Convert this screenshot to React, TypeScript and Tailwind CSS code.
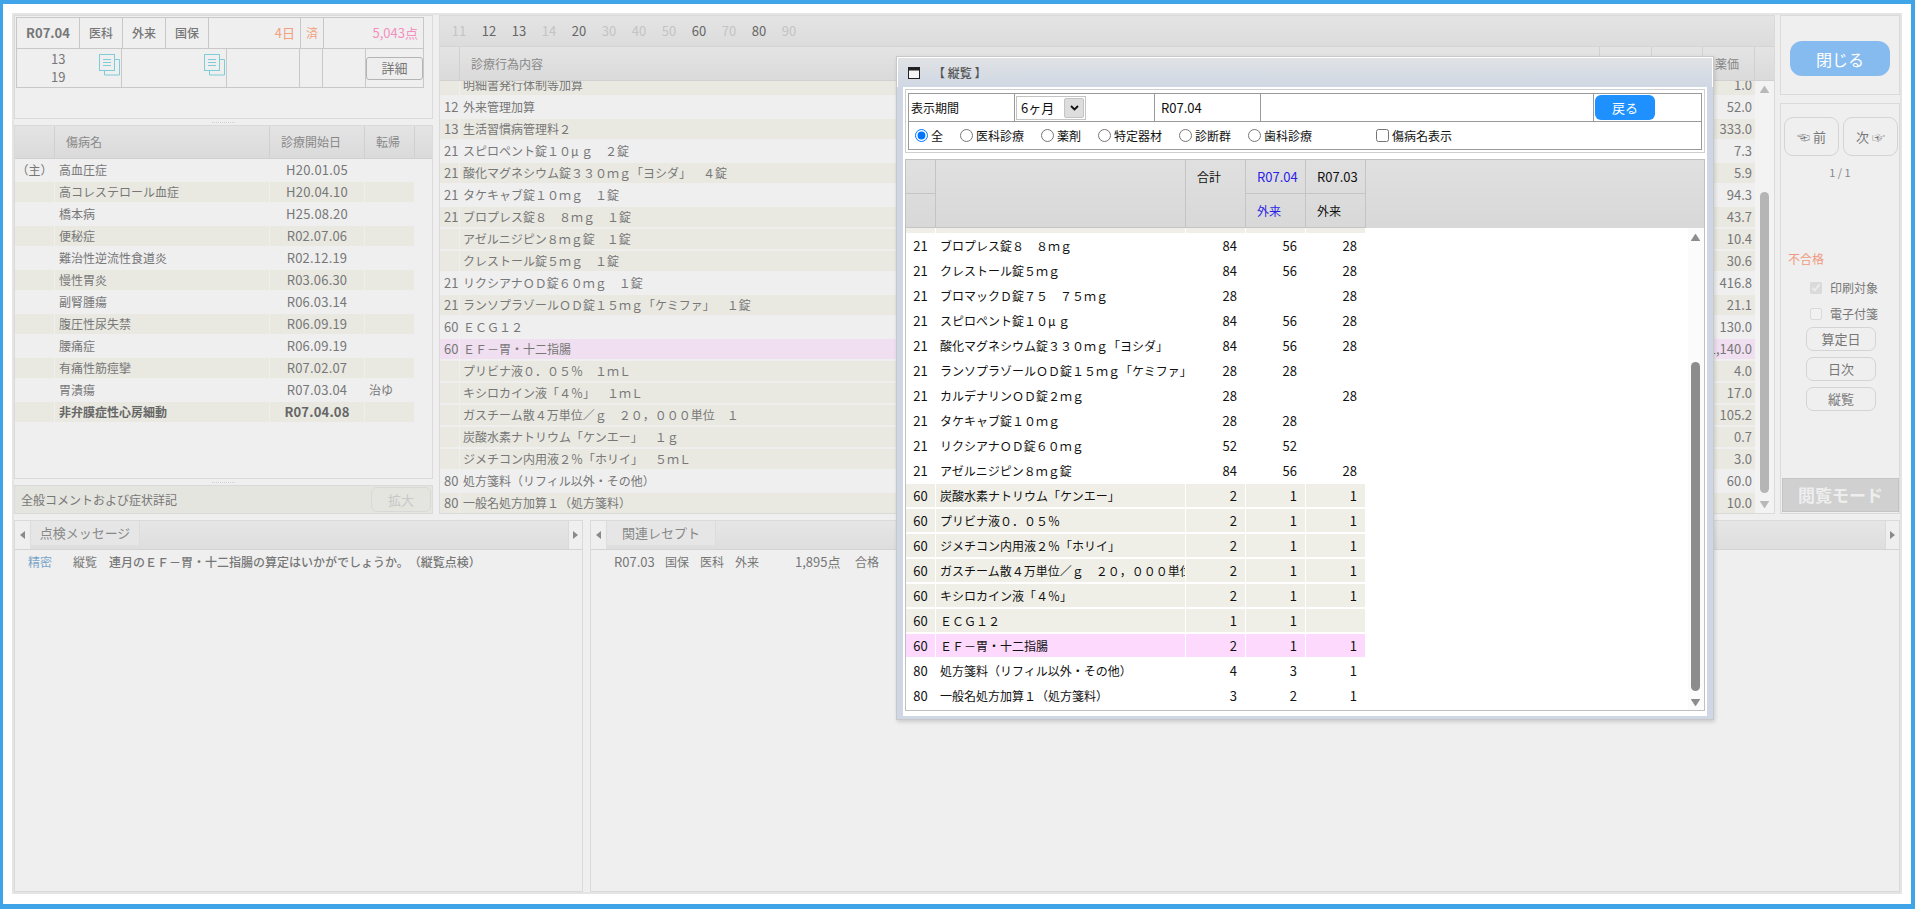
const TABS = [
  { label: '11', on: false },
  { label: '12', on: true },
  { label: '13', on: true },
  { label: '14', on: false },
  { label: '20', on: true },
  { label: '30', on: false },
  { label: '40', on: false },
  { label: '50', on: false },
  { label: '60', on: true },
  { label: '70', on: false },
  { label: '80', on: true },
  { label: '90', on: false },
]

const DISEASES = [
  { main: '（主）', name: '高血圧症', date: 'H20.01.05', end: '' },
  { main: '', name: '高コレステロール血症', date: 'H20.04.10', end: '' },
  { main: '', name: '橋本病', date: 'H25.08.20', end: '' },
  { main: '', name: '便秘症', date: 'R02.07.06', end: '' },
  { main: '', name: '難治性逆流性食道炎', date: 'R02.12.19', end: '' },
  { main: '', name: '慢性胃炎', date: 'R03.06.30', end: '' },
  { main: '', name: '副腎腫瘍', date: 'R06.03.14', end: '' },
  { main: '', name: '腹圧性尿失禁', date: 'R06.09.19', end: '' },
  { main: '', name: '腰痛症', date: 'R06.09.19', end: '' },
  { main: '', name: '有痛性筋痙攣', date: 'R07.02.07', end: '' },
  { main: '', name: '胃潰瘍', date: 'R07.03.04', end: '治ゆ' },
  { main: '', name: '非弁膜症性心房細動', date: 'R07.04.08', end: '', bold: true },
]

const ACTS = [
  { code: '', name: '明細書発行体制等加算', value: '1.0', tone: 'stripe' },
  { code: '12', name: '外来管理加算', value: '52.0', tone: '' },
  { code: '13', name: '生活習慣病管理料２', value: '333.0', tone: 'stripe' },
  { code: '21', name: 'スピロペント錠１０μ\u2009ｇ　２錠', value: '7.3', tone: '' },
  { code: '21', name: '酸化マグネシウム錠３３０ｍｇ「ヨシダ」　４錠', value: '5.9', tone: 'stripe' },
  { code: '21', name: 'タケキャブ錠１０ｍｇ　１錠', value: '94.3', tone: '' },
  { code: '21', name: 'ブロプレス錠８　８ｍｇ　１錠', value: '43.7', tone: 'stripe' },
  { code: '', name: 'アゼルニジピン８ｍｇ錠　１錠', value: '10.4', tone: 'stripe' },
  { code: '', name: 'クレストール錠５ｍｇ　１錠', value: '30.6', tone: 'stripe' },
  { code: '21', name: 'リクシアナＯＤ錠６０ｍｇ　１錠', value: '416.8', tone: '' },
  { code: '21', name: 'ランソプラゾールＯＤ錠１５ｍｇ「ケミファ」　１錠', value: '21.1', tone: 'stripe' },
  { code: '60', name: 'ＥＣＧ１２', value: '130.0', tone: '' },
  { code: '60', name: 'ＥＦ－胃・十二指腸', value: '1,140.0', tone: 'pink' },
  { code: '', name: 'プリビナ液０．０５％　１ｍＬ', value: '4.0', tone: 'stripe' },
  { code: '', name: 'キシロカイン液「４％」　１ｍＬ', value: '17.0', tone: 'stripe' },
  { code: '', name: 'ガスチーム散４万単位／ｇ　２０，０００単位　１', value: '105.2', tone: 'stripe' },
  { code: '', name: '炭酸水素ナトリウム「ケンエー」　１ｇ', value: '0.7', tone: 'stripe' },
  { code: '', name: 'ジメチコン内用液２％「ホリイ」　５ｍＬ', value: '3.0', tone: 'stripe' },
  { code: '80', name: '処方箋料（リフィル以外・その他）', value: '60.0', tone: '' },
  { code: '80', name: '一般名処方加算１（処方箋料）', value: '10.0', tone: 'stripe' },
]

const SUMMARY = [
  { code: '21', name: 'ブロプレス錠８　８ｍｇ', total: '84', a: '56', b: '28', tone: '' },
  { code: '21', name: 'クレストール錠５ｍｇ', total: '84', a: '56', b: '28', tone: '' },
  { code: '21', name: 'ブロマックＤ錠７５　７５ｍｇ', total: '28', a: '', b: '28', tone: '' },
  { code: '21', name: 'スピロペント錠１０μ\u2009ｇ', total: '84', a: '56', b: '28', tone: '' },
  { code: '21', name: '酸化マグネシウム錠３３０ｍｇ「ヨシダ」', total: '84', a: '56', b: '28', tone: '' },
  { code: '21', name: 'ランソプラゾールＯＤ錠１５ｍｇ「ケミファ」', total: '28', a: '28', b: '', tone: '' },
  { code: '21', name: 'カルデナリンＯＤ錠２ｍｇ', total: '28', a: '', b: '28', tone: '' },
  { code: '21', name: 'タケキャブ錠１０ｍｇ', total: '28', a: '28', b: '', tone: '' },
  { code: '21', name: 'リクシアナＯＤ錠６０ｍｇ', total: '52', a: '52', b: '', tone: '' },
  { code: '21', name: 'アゼルニジピン８ｍｇ錠', total: '84', a: '56', b: '28', tone: '' },
  { code: '60', name: '炭酸水素ナトリウム「ケンエー」', total: '2', a: '1', b: '1', tone: 'stripe' },
  { code: '60', name: 'プリビナ液０．０５％', total: '2', a: '1', b: '1', tone: 'stripe' },
  { code: '60', name: 'ジメチコン内用液２％「ホリイ」', total: '2', a: '1', b: '1', tone: 'stripe' },
  { code: '60', name: 'ガスチーム散４万単位／ｇ　２０，０００単位　１', total: '2', a: '1', b: '1', tone: 'stripe' },
  { code: '60', name: 'キシロカイン液「４％」', total: '2', a: '1', b: '1', tone: 'stripe' },
  { code: '60', name: 'ＥＣＧ１２', total: '1', a: '1', b: '', tone: 'stripe' },
  { code: '60', name: 'ＥＦ－胃・十二指腸', total: '2', a: '1', b: '1', tone: 'pink' },
  { code: '80', name: '処方箋料（リフィル以外・その他）', total: '4', a: '3', b: '1', tone: '' },
  { code: '80', name: '一般名処方加算１（処方箋料）', total: '3', a: '2', b: '1', tone: '' },
]

const RADIOS = ['全', '医科診療', '薬剤', '特定器材', '診断群', '歯科診療']

function DocIcon() {
  return (
    <svg width="21" height="22" viewBox="0 0 21 22" fill="none" stroke="#7ccdd8" strokeWidth="1">
      <path d="M15.5 5.5h5v15.5h-15v-5" />
      <rect x="0.5" y="0.5" width="15" height="16" fill="#efefef" />
      <path d="M4 5.5h8M4 8.5h8M4 11.5h8" />
    </svg>
  )
}

function Triangle({ down, color, size = 9 }: { down?: boolean; color: string; size?: number }) {
  return (
    <svg width={size} height={size - 2} viewBox="0 0 9 7" className="shrink-0">
      <path d={down ? 'M0 0h9L4.5 7z' : 'M4.5 0L9 7H0z'} fill={color} stroke={color} strokeWidth="0.6" strokeLinejoin="round" />
    </svg>
  )
}

function SideArrow({ left }: { left?: boolean }) {
  return (
    <svg width="5" height="8" viewBox="0 0 5 8">
      <path d={left ? 'M5 0v8L0 4z' : 'M0 0v8l5-4z'} fill="#8a8a8a" />
    </svg>
  )
}

function Splitter() {
  return (
    <div className="h-[6px] flex items-center justify-center">
      <div className="w-[23px] border-t border-dotted border-[#cfcfcf]" />
    </div>
  )
}

function TopSummary() {
  return (
    <div className="h-[104px] border border-[#dadada] p-px pr-2">
      <div className="border border-[#c8c8c8] text-[#777]">
        <div className="flex h-[31px] border-b border-[#c8c8c8] items-center text-[12px]">
          <div className="w-[63px] h-full border-r border-[#c8c8c8] flex items-center justify-center font-bold text-[13px]">R07.04</div>
          <div className="w-[43px] h-full border-r border-[#c8c8c8] flex items-center justify-center font-medium">医科</div>
          <div className="w-[43px] h-full border-r border-[#c8c8c8] flex items-center justify-center font-medium">外来</div>
          <div className="w-[43px] h-full border-r border-[#c8c8c8] flex items-center justify-center font-medium">国保</div>
          <div className="w-[92px] h-full border-r border-[#c8c8c8] flex items-center justify-end pr-[5px] text-[13px] text-[#f2a07e]">4日</div>
          <div className="w-[23px] h-full border-r border-[#c8c8c8] flex items-center justify-center text-[#f2a07e]">済</div>
          <div className="flex-1 h-full flex items-center justify-end pr-[5px] text-[13px] text-[#f48fbe]">5,043点</div>
        </div>
        <div className="flex h-[38px]">
          <div className="w-[105px] border-r border-[#c8c8c8] flex justify-between pl-[34px] pr-[1px]">
            <div className="text-[13px] leading-[18px] pt-px">
              <div>13</div>
              <div>19</div>
            </div>
            <div className="pt-[5px]"><DocIcon /></div>
          </div>
          <div className="w-[105px] border-r border-[#c8c8c8] flex justify-end pr-[1px] pt-[5px]"><DocIcon /></div>
          <div className="w-[73px] border-r border-[#c8c8c8]" />
          <div className="w-[23px] border-r border-[#c8c8c8]" />
          <div className="w-[43px] border-r border-[#c8c8c8]" />
          <div className="flex-1 flex items-center justify-center">
            <button className="w-[57px] h-[23px] rounded-[3px] border border-[#b4b4b4] bg-[#eeeeee] text-[13px] text-[#777]">詳細</button>
          </div>
        </div>
      </div>
    </div>
  )
}

function DiseaseTable() {
  return (
    <div className="h-[354px] border border-[#dadada] text-[12px] text-[#777] overflow-hidden">
      <div className="flex h-[33px] bg-gradient-to-b from-[#e4e4e4] to-[#dadada] border-b border-[#d0d0d0] text-[#888]">
        <div className="w-[40px] border-r border-[#d0d0d0]" />
        <div className="w-[215px] border-r border-[#d0d0d0] pl-[11px] flex items-center">傷病名</div>
        <div className="w-[95px] border-r border-[#d0d0d0] pl-[11px] flex items-center">診療開始日</div>
        <div className="w-[50px] border-r border-[#d0d0d0] pl-[11px] flex items-center">転帰</div>
      </div>
      <div className="pr-[18px]">
        {DISEASES.map((row, i) => {
          const bg = i % 2 === 1 ? 'bg-[#e9e9e2]' : ''
          return (
            <div key={row.name} className={`flex h-[22px] py-px gap-px ${row.bold ? 'font-bold text-[#666]' : ''}`}>
              <div className={`w-[39px] flex items-center justify-center ${bg}`}>{row.main}</div>
              <div className={`w-[214px] pl-1 flex items-center ${bg}`}>{row.name}</div>
              <div className={`w-[94px] flex items-center justify-center text-[13px] tracking-[0.2px] ${bg}`}>{row.date}</div>
              <div className={`flex-1 pl-[4px] flex items-center ${bg}`}>{row.end}</div>
            </div>
          )
        })}
      </div>
    </div>
  )
}

function ActsPanel() {
  return (
    <div className="w-[1336px] h-[499px] border border-[#dadada] flex flex-col text-[#777] overflow-hidden">
      <div className="flex h-[31px] shrink-0 pl-[4px] items-center text-[13px] bg-gradient-to-b from-[#e4e4e4] to-[#dcdcdc] border-b border-[#d4d4d4]">
        {TABS.map(tab => (
          <div key={tab.label} className={`w-[30px] text-center ${tab.on ? 'text-[#666]' : 'text-[#c4c4c4]'}`}>{tab.label}</div>
        ))}
      </div>
      <div className="flex h-[34px] shrink-0 text-[12px] text-[#888] bg-gradient-to-b from-[#e4e4e4] to-[#dadada] border-b border-[#d0d0d0]">
        <div className="w-[20px] border-r border-[#d0d0d0]" />
        <div className="w-[1140px] border-r border-[#d0d0d0] pl-[11px] flex items-center">診療行為内容</div>
        <div className="w-[52px] border-r border-[#d0d0d0]" />
        <div className="w-[51px] border-r border-[#d0d0d0] " />
        <div className="w-[52px] border-r border-[#d0d0d0] pl-[12px] flex items-center whitespace-nowrap">薬価</div>
      </div>
      <div className="flex flex-1 min-h-0">
        <div className="w-[1315px] overflow-hidden">
          <div className="-mt-[7px]">
            {ACTS.map((row, i) => {
              const bg = row.tone === 'pink' ? 'bg-[#f0dff0]' : row.tone === 'stripe' ? 'bg-[#e9e9e2]' : ''
              return (
                <div key={i} className="flex h-[22px] py-px gap-px">
                  <div className={`w-[19px] pl-[4px] flex items-center text-[13px] ${bg}`}>{row.code}</div>
                  <div className={`flex-1 pl-[3px] flex items-center justify-between text-[12px] ${bg}`}>
                    <span>{row.name}</span>
                    <span className="pr-[3px] text-[13px]">{row.value}</span>
                  </div>
                </div>
              )
            })}
          </div>
        </div>
        <div className="flex-1 bg-[#f3f3f3] flex flex-col items-center pt-[5px] pr-[1px]">
          <Triangle color="#b8b8b8" />
          <div className="w-[9px] h-[301px] mt-[99px] rounded-full bg-[#b5b5b5]" />
          <div className="mt-[8px]"><Triangle down color="#b8b8b8" /></div>
        </div>
      </div>
    </div>
  )
}

function SidePanel() {
  return (
    <div className="w-[120px] flex flex-col gap-[8px] text-[#777]">
      <div className="h-[80px] border border-[#dadada] flex items-start justify-center pt-[25px]">
        <button className="w-[100px] h-[35px] rounded-[12px] bg-[#85bbee] text-white text-[16px]">閉じる</button>
      </div>
      <div className="flex-1 border border-[#dadada] flex flex-col pl-[3px] pt-[13px] text-[12px]">
        <div className="flex gap-[4px]">
          <button className="w-[55px] h-[39px] rounded-[9px] border border-[#d4d4d4] text-[13px]">☜ 前</button>
          <button className="w-[55px] h-[39px] rounded-[9px] border border-[#d4d4d4] text-[13px]">次 ☞</button>
        </div>
        <div className="text-center mt-[8px] pr-[3px] text-[11px] text-[#888]">1 / 1</div>
        <div className="mt-[69px] pl-[4px] text-[#f19a80]">不合格</div>
        <label className="flex items-center gap-[8px] pl-[26px] mt-[10px] h-[20px]">
          <input type="checkbox" checked disabled readOnly className="w-[12px] h-[12px] opacity-60" />
          印刷対象
        </label>
        <label className="flex items-center gap-[8px] pl-[26px] mt-[6px] h-[20px]">
          <input type="checkbox" disabled className="w-[12px] h-[12px] opacity-60" />
          電子付箋
        </label>
        <div className="flex flex-col gap-[6px] pl-[22px] mt-[3px]">
          {['算定日', '日次', '縦覧'].map(label => (
            <button key={label} className="w-[70px] h-[24px] rounded-[7px] border border-[#d4d4d4] text-[13px]">{label}</button>
          ))}
        </div>
        <div className="mt-auto -ml-[2px] mb-px h-[34px] bg-[#d0d0d0] border border-[#c4c4c4] flex items-center justify-center text-[#eeeeee] text-[17px] font-bold">閲覧モード</div>
      </div>
    </div>
  )
}

function BottomPanel({ width, tab, children }: { width: string; tab: string; children: React.ReactNode }) {
  return (
    <div className={`${width} border border-[#dadada] flex flex-col text-[#777] text-[12px]`}>
      <div className="flex h-[29px] shrink-0 bg-gradient-to-b from-[#e6e6e6] to-[#dedede] border-b border-[#d4d4d4]">
        <div className="w-[15px] bg-[#efefef] flex items-center justify-center"><SideArrow left /></div>
        <div className="w-[110px] h-[24px] bg-[#e6e6e6] border-x border-[#dcdcdc] flex items-center justify-center text-[#888] text-[13px]">{tab}</div>
        <div className="flex-1" />
        <div className="w-[14px] bg-[#efefef] flex items-center justify-center border-l border-[#dadada]"><SideArrow /></div>
      </div>
      {children}
    </div>
  )
}

function SummaryCell({ width, tone, children, right }: { width: string; tone: string; children?: React.ReactNode; right?: boolean }) {
  const bg = tone === 'pink' ? 'bg-[#fdd9fd]' : tone === 'stripe' ? 'bg-[#efefe7]' : ''
  return (
    <div className={`${width} ${bg} flex items-center overflow-hidden whitespace-nowrap ${right ? 'justify-end pr-2 text-[13px]' : ''}`}>
      {children}
    </div>
  )
}

function SummaryModal() {
  return (
    <div className="absolute left-[893px] top-[52px] w-[818px] h-[664px] border border-[#c8c8c8] bg-[#ced7e3] shadow-[1px_2px_4px_rgba(0,0,0,0.15)] flex flex-col text-[12px] text-[#111]">
      <div className="h-[30px] shrink-0 border-t border-x border-white bg-gradient-to-b from-[#e0e2e4] to-[#d0d8e4] flex items-center gap-[13px] pl-[10px] font-medium text-[#555]">
        <svg width="12" height="12" viewBox="0 0 12 12">
          <rect x="0.5" y="0.5" width="11" height="11" fill="#f5f5f5" stroke="#222" />
          <rect x="0" y="0" width="12" height="3.5" fill="#222" />
        </svg>
        <span>【 縦覧 】</span>
      </div>
      <div className="mx-[6px] mb-[3px] bg-white flex-1 flex flex-col px-[2px] pt-[2px] pb-[5px] min-h-0">
        <div className="border border-[#cfcfcf] px-[2px] py-[3px] h-[64px] shrink-0">
          <div className="border border-[#9a9a9a]">
            <div className="flex h-[28px] border-b border-[#9a9a9a]">
              <div className="w-[106px] border-r border-[#9a9a9a] pl-[2px] flex items-center">表示期間</div>
              <div className="w-[140px] border-r border-[#9a9a9a] pl-[1px] flex items-center">
                <div className="w-[70px] h-[24px] border border-[#c4c4c4] flex items-center justify-between pl-[4px] pr-[1px]">
                  <span className="text-[13px]">6ヶ月</span>
                  <span className="w-[20px] h-[20px] bg-[#dddddd] border border-[#c4c4c4] rounded-[2px] flex items-center justify-center">
                    <svg width="9" height="6" viewBox="0 0 9 6" fill="none" stroke="#111" strokeWidth="1.8">
                      <path d="M1 1l3.5 3.5L8 1" />
                    </svg>
                  </span>
                </div>
              </div>
              <div className="w-[106px] border-r border-[#9a9a9a] pl-[6px] flex items-center text-[13px]">R07.04</div>
              <div className="w-[333px] border-r border-[#9a9a9a]" />
              <div className="pl-[1px] flex items-start">
                <button className="w-[60px] h-[25px] mt-[1px] rounded-[6px] bg-[#1e90ff] text-white text-[13px]">戻る</button>
              </div>
            </div>
            <div className="flex h-[27px] items-center pl-[6px]">
              <div className="flex items-center gap-[17px]">
                {RADIOS.map((label, i) => (
                  <label key={label} className="flex items-center gap-[3px]">
                    <input type="radio" name="scope" checked={i === 0} readOnly className="w-[13px] h-[13px]" />
                    {label}
                  </label>
                ))}
              </div>
              <label className="flex items-center gap-[3px] ml-[64px]">
                <input type="checkbox" className="w-[13px] h-[13px]" />
                傷病名表示
              </label>
            </div>
          </div>
        </div>
        <div className="mt-[6px] flex-1 min-h-0 border border-[#c0c0c0] flex flex-col">
          <div className="h-[68px] shrink-0 flex bg-gradient-to-b from-[#e0e0e0] to-[#d8d8d8]">
            <div className="w-[30px] border-r border-b border-[#c4c4c4] flex flex-col">
              <div className="h-[34px] border-b border-[#c4c4c4]" />
            </div>
            <div className="w-[250px] border-r border-b border-[#c4c4c4]" />
            <div className="w-[60px] border-r border-b border-[#c4c4c4] pl-[11px] pt-[8px]">合計</div>
            {[{ date: 'R07.04', color: 'text-[#2a1ee8]' }, { date: 'R07.03', color: '' }].map(col => (
              <div key={col.date} className={`w-[60px] border-r border-b border-[#c4c4c4] flex flex-col ${col.color}`}>
                <div className="h-[34px] border-b border-[#c4c4c4] pl-[11px] flex items-center text-[13px]">{col.date}</div>
                <div className="flex-1 pl-[11px] flex items-center">外来</div>
              </div>
            ))}
          </div>
          <div className="flex-1 min-h-0 flex">
            <div className="w-[460px]">
              <div className="flex h-[5px] gap-px">
                <div className="w-[29px] bg-[#f0efe7]" />
                <div className="w-[249px] bg-[#f0efe7]" />
                <div className="w-[59px] bg-[#f0efe7]" />
                <div className="w-[59px] bg-[#f0efe7]" />
                <div className="w-[59px] bg-[#f0efe7]" />
              </div>
              {SUMMARY.map(row => (
                <div key={row.name} className="flex h-[25px] py-px gap-px">
                  <SummaryCell width="w-[29px] justify-center text-[13px]" tone={row.tone}>{row.code}</SummaryCell>
                  <SummaryCell width="w-[249px] pl-1" tone={row.tone}>{row.name}</SummaryCell>
                  <SummaryCell width="w-[59px]" tone={row.tone} right>{row.total}</SummaryCell>
                  <SummaryCell width="w-[59px]" tone={row.tone} right>{row.a}</SummaryCell>
                  <SummaryCell width="w-[59px]" tone={row.tone} right>{row.b}</SummaryCell>
                </div>
              ))}
            </div>
            <div className="flex-1 flex justify-end">
              <div className="w-[16px] bg-[#fbfbfb] flex flex-col items-center pt-[6px] pr-[1px]">
                <Triangle color="#8c8c8c" />
                <div className="w-[9px] h-[329px] mt-[121px] rounded-full bg-[#8c8c8c]" />
                <div className="mt-[8px]"><Triangle down color="#8c8c8c" /></div>
              </div>
            </div>
          </div>
        </div>
      </div>
    </div>
  )
}

export default function App() {
  return (
    <div className="relative w-[1915px] h-[909px] bg-white border-t-4 border-l-[3px] border-r-4 border-b-[5px] border-[#3fa4e8] pl-[9px] pt-[9px] pr-[9px] pb-[10px] font-['Noto_Sans_CJK_JP','Noto_Sans',sans-serif] [text-spacing-trim:space-all] overflow-hidden">
      <div className="h-full bg-[#efefef] border-2 border-[#e4e4e4] flex flex-col gap-[6px]">
        <div className="flex h-[499px] shrink-0">
          <div className="w-[419px] flex flex-col">
            <TopSummary />
            <Splitter />
            <DiseaseTable />
            <Splitter />
            <div className="h-[29px] bg-[#e5e5df] border border-[#dadada] flex items-center justify-between pl-[6px] pr-px text-[12px] text-[#777]">
              <span>全般コメントおよび症状詳記</span>
              <button className="w-[60px] h-[25px] rounded-[6px] border border-[#d8d8d8] text-[#c8c8c8] text-[13px]">拡大</button>
            </div>
          </div>
          <div className="w-[6px]" />
          <ActsPanel />
          <div className="w-[5px]" />
          <SidePanel />
        </div>
        <div className="flex flex-1 gap-[7px] min-h-0">
          <BottomPanel width="w-[569px]" tab="点検メッセージ">
            <div className="flex pl-[13px] pt-[3px] leading-[18px]">
              <span className="w-[45px] text-[#7aa5c8]">精密</span>
              <span className="w-[36px]">縦覧</span>
              <span className="font-medium">連月のＥＦ－胃・十二指腸の算定はいかがでしょうか。（縦覧点検）</span>
            </div>
          </BottomPanel>
          <BottomPanel width="w-[1310px]" tab="関連レセプト">
            <div className="flex pl-[23px] pt-[3px] leading-[18px]">
              <span className="w-[51px] text-[13px]">R07.03</span>
              <span className="w-[35px]">国保</span>
              <span className="w-[35px]">医科</span>
              <span className="w-[60px]">外来</span>
              <span className="w-[45px] text-right text-[13px] whitespace-nowrap">1,895点</span>
              <span className="pl-[15px]">合格</span>
            </div>
          </BottomPanel>
        </div>
      </div>
      <SummaryModal />
    </div>
  )
}
